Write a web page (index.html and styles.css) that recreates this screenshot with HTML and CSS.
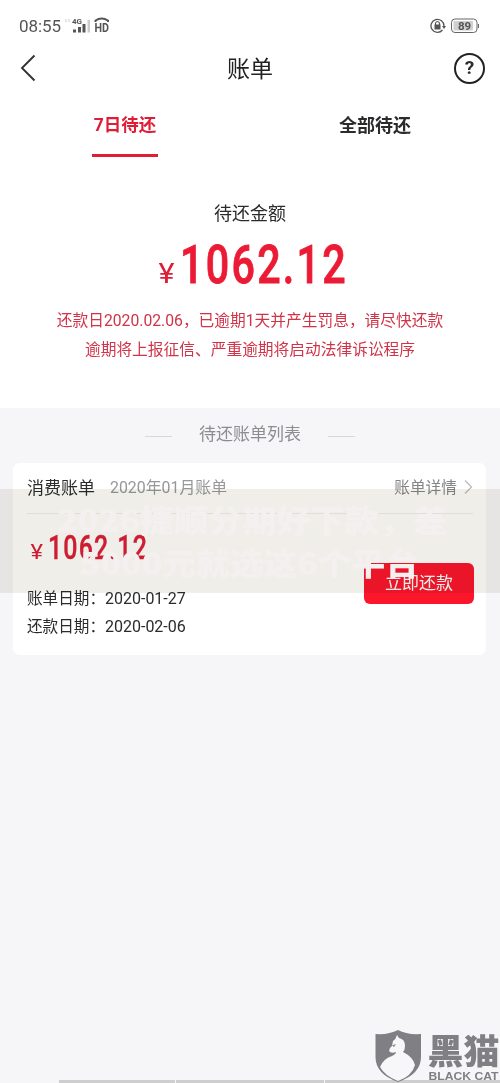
FILE: index.html
```html
<!DOCTYPE html>
<html lang="zh-CN">
<head>
<meta charset="utf-8">
<title>账单</title>
<link rel="stylesheet" href="styles.css">
</head>
<body>
<main class="screen">
  <section class="top">
    <div class="status">
      <span class="time">08:55</span>
      <svg class="signal" width="46" height="18" viewBox="0 0 46 18">
        <path d="M2 5v-3M5 5v-3" stroke="#ccc"/>
        <text x="8" y="7" class="net">4G</text>
        <path d="M9 12.500h3v3H9zM14 10h3v5.500h-3zM18.500 7h3v8.500h-3z" fill="#555"/>
        <path d="M23.500 3h2.500v12.500h-2.500z" fill="#ccc"/>
        <text x="30.500" y="15" class="hd" textLength="14.500" lengthAdjust="spacingAndGlyphs">HD</text>
        <path d="M31.500 5V3.500q6-4 12.500 0V5" fill="none" stroke="#555" stroke-width="2"/>
      </svg>
      <svg class="power" width="52" height="18" viewBox="0 0 52 18">
        <path d="M12.500 13A6.500 6.500 0 1 1 14 9" fill="none" stroke="#555" stroke-width="1.300"/>
        <path d="M4.500 7.500h6v5h-6z" fill="#555"/><path d="M5.500 8V6q2-3 4 0v2" fill="none" stroke="#555" stroke-width="1.200"/>
        <path d="M12 9h4l-2 3z" fill="#555"/>
        <rect x="21.500" y="2" width="25.500" height="13.500" rx="3.500" fill="#fff" stroke="#666"/>
        <rect x="23.500" y="4" width="19.500" height="9.500" rx="1" fill="#d0d0d0"/>
        <path d="M48.500 7v4" stroke="#666"/>
        <text x="28" y="13" class="charge" textLength="13">89</text>
      </svg>
    </div>
    <header class="nav">
      <svg width="16" height="28" viewBox="0 0 16 28"><path d="M14.500 1.500L2 14l12.500 12.500" fill="none" stroke="#333" stroke-width="1.900"/></svg>
      <h1 class="title">账单</h1>
      <span class="help">?</span>
    </header>
    <nav class="tabs">
      <div class="tab on"><span>7日待还</span></div>
      <div class="tab"><span>全部待还</span></div>
    </nav>
    <div class="due">
      <div class="due-label">待还金额</div>
      <svg class="due-sum" width="200" height="50" viewBox="0 0 200 50">
        <text x="8.500" y="43" class="yen" font-size="27" textLength="16" lengthAdjust="spacingAndGlyphs">¥</text>
        <text x="30" y="43" class="sum" font-size="54.500" textLength="168" lengthAdjust="spacingAndGlyphs">1062.12</text>
      </svg>
      <p class="warn w1">还款日2020.02.06，已逾期1天并产生罚息，请尽快还款</p>
      <p class="warn w2">逾期将上报征信、严重逾期将启动法律诉讼程序</p>
    </div>
  </section>
  <h2 class="list-title"><span>待还账单列表</span></h2>
  <article class="card">
    <div class="card-head">
      <span class="kind">消费账单</span>
      <span class="month">2020年01月账单</span>
      <span class="detail">账单详情</span>
      <svg width="9" height="16" viewBox="0 0 9 16"><path d="M1 1.500L7.500 8L1 14.500" fill="none" stroke="#bbb" stroke-width="1.300"/></svg>
    </div>
    <div class="card-body">
      <div>
        <svg class="card-sum" width="130" height="32" viewBox="0 0 130 32">
          <text x="3.500" y="28" class="yen" font-size="20" textLength="12.500" lengthAdjust="spacingAndGlyphs">¥</text>
          <text x="21" y="28" class="sum small" font-size="32.500" textLength="100" lengthAdjust="spacingAndGlyphs">1062.12</text>
        </svg>
        <p class="date">账单日期：<b>2020-01-27</b></p>
        <p class="date">还款日期：<b>2020-02-06</b></p>
      </div>
      <button class="pay">立即还款</button>
    </div>
  </article>
  <div class="veil"></div>
  <svg class="veil-text" width="500" height="104" viewBox="0 0 500 104">
    <text x="57" y="43" textLength="390" lengthAdjust="spacingAndGlyphs">2026捷顺分期好下款，差</text>
    <text x="80" y="86" textLength="339" lengthAdjust="spacingAndGlyphs">5000元就选这6个平台</text>
  </svg>
  <div class="dock"><i></i><i></i><i></i></div>
  <svg class="brand" width="127" height="54" viewBox="0 0 127 54">
    <path d="M2.500 5q13 1 22.500-4q9 5 23 4v23q0 17-23 25Q2.500 45 2.500 28z" fill="#808084"/>
    <path d="M24 6l2 3q6 1 6 8q0 4-2 6q10 5 12 13q-3 11-17 16Q12 47 7 38q3-8 12-11q4-2 4-4q-5 2-7-1q0-3 3-5l1-5q3-2 4-6z" fill="#f7f7fa"/>
    <path d="M19 16.500l4-1.500-2 3z" fill="#808084"/>
    <text x="54.500" y="34.500" class="brand-cn" textLength="72" lengthAdjust="spacingAndGlyphs">黑猫</text>
    <text x="55.500" y="50.500" class="brand-en" textLength="70" lengthAdjust="spacingAndGlyphs">BLACK CAT</text>
  </svg>
</main>
</body>
</html>
```
FILE: styles.css
```css
* { box-sizing: border-box; margin: 0; padding: 0; }
body { background: #f6f6f9; font-family: Roboto, "Noto Sans CJK SC", sans-serif; color: #2b2b2e; }
.screen { position: relative; height: 1083px; overflow: hidden; background: #f6f6f9; }
.top { height: 408px; background: #fff; }
.status { height: 42px; padding: 17px 18px 0 19px; display: flex; align-items: flex-start; }
.time { font-size: 17px; line-height: 19px; color: #555; letter-spacing: -.1px; }
.signal { margin-left: 3px; }
.power { margin-left: auto; }
.net { font: bold 8px Roboto, sans-serif; fill: #555; }
.hd { font: bold 13px Roboto, sans-serif; fill: #555; }
.charge { font: bold 11.500px Roboto, sans-serif; fill: #555; }
.nav { height: 52px; padding: 0 15px 0 20px; display: flex; justify-content: space-between; align-items: center; }
.title { font-size: 23px; font-weight: 400; line-height: 34px; padding: 3px 0 0 10px; color: #222; }
.help { width: 31px; height: 31px; border: 2px solid #222; border-radius: 50%; font-size: 19px; font-weight: 700; line-height: 26px; text-align: center; }
.tabs { display: flex; height: 63px; }
.tab { flex: 1; display: flex; justify-content: center; font-size: 18px; font-weight: 700; line-height: 63px; }
.tab span { height: 63px; }
.on { color: #e01d36; }
.on span { border-bottom: 3px solid #e01d36; width: 66px; text-align: center; white-space: nowrap; font-size: 17.500px; }
.due { display: flex; flex-direction: column; align-items: center; padding-top: 44px; }
.due-label { font-size: 18px; line-height: 26px; }
.due-sum { margin-top: 13px; }
.yen { font-family: Roboto, sans-serif; fill: #dc1f36; }
.sum { font-family: Roboto, sans-serif; font-weight: 500; fill: #ec1b35; stroke: #ec1b35; stroke-width: .9px; letter-spacing: 3px; }
.small { fill: #dc1f36; stroke: #dc1f36; stroke-width: .4px; letter-spacing: 1.500px; }
.warn { font-size: 15.720px; line-height: 29px; color: #d13348; white-space: nowrap; }
.w1 { margin-top: 16px; }
.list-title { height: 55px; display: flex; justify-content: center; align-items: center; gap: 27px; font-size: 17px; font-weight: 400; color: #8d8d91; }
.list-title::before, .list-title::after { content: ""; width: 27px; height: 1px; background: #d8d8dc; margin-top: 1px; }
.list-title span { padding-bottom: 6px; }
.card { margin: 0 14px 0 13px; height: 192px; background: #fff; border-radius: 7px; padding: 0 13px 0 14px; }
.card-head { height: 51px; border-bottom: 1px solid #eee; display: flex; align-items: center; padding-bottom: 3px; }
.kind { font-size: 17px; }
.month { margin-left: 15px; font-size: 15.900px; color: #98989b; }
.detail { margin: 0 7px 0 auto; font-size: 15.700px; color: #858588; }
.card-body { display: flex; justify-content: space-between; }
.card-sum { display: block; margin: 17px 0 22px; }
.date { font-size: 15.600px; line-height: 28px; white-space: nowrap; }
.date b { font-weight: 400; font-size: 16px; }
.pay { margin: 49px -1px 0 0; width: 110px; height: 41px; border: 0; border-radius: 6px; background: #fb162c; color: #fff; font: 17px Roboto, "Noto Sans CJK SC", sans-serif; padding-bottom: 5px; }
.veil { position: absolute; left: 0; right: 0; top: 489px; height: 104px; background: #efeee9; mix-blend-mode: multiply; }
.veil-text { position: absolute; left: 0; top: 489px; font: 900 31px "Noto Sans CJK SC", sans-serif; fill: #f4f0ef; }
.dock { position: absolute; left: 59px; right: 0; bottom: 0; height: 3px; display: grid; grid-template-columns: 116px 148px 1fr; gap: 1px; }
.dock i { background: #cecece; }
.brand { position: absolute; left: 373px; top: 1029px; }
.brand-cn { font: 900 34px "Noto Sans CJK SC", sans-serif; fill: #808084; }
.brand-en { font: bold 11px "Liberation Sans", sans-serif; fill: #808084; }
```
